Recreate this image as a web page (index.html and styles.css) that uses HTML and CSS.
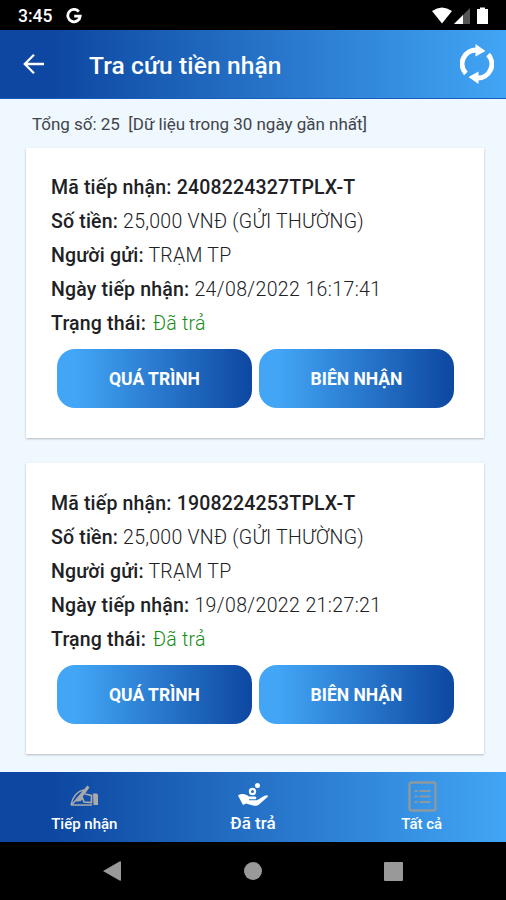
FILE: index.html
```html
<!DOCTYPE html>
<html lang="vi">
<head>
<meta charset="utf-8">
<title>Tra cứu tiền nhận</title>
<link rel="stylesheet" href="styles.css">
</head>
<body>
<div class="status">
  <span class="clock">3:45</span>
  <svg class="google" width="16" height="16" viewBox="0 0 16 16"><path d="M12.8 3.6A6.2 6.2 0 1 0 14.2 8.1H8.2" fill="none" stroke="#fff" stroke-width="2.8"/></svg>
  <svg class="signals" width="58" height="18" viewBox="0 0 58 18"><path d="M0 4Q10-3 20 4L10 16.500Z" fill="#fff"/><path d="M38 1V17H22Z" fill="#555"/><path d="M31 8V17H22Z" fill="#fff"/><path d="M48 2V.5h5V2h3v15H45V2Z" fill="#fff"/></svg>
</div>
<header class="bar">
  <svg class="back" width="22" height="22" viewBox="0 0 22 22" fill="none" stroke="#fff" stroke-width="2.300"><path d="M21 11H2M11 1.800 1.800 11 11 20.200"/></svg>
  <h1>Tra cứu tiền nhận</h1>
  <svg class="refresh" width="34" height="40" viewBox="0 0 34 40"><g fill="none" stroke="#fff" stroke-width="5"><path d="M5.900 29.500A14 14 0 0 1 17 6"/><path d="M28.100 10.500A14 14 0 0 1 17 34"/></g><path d="M15.500 0 25.500 7 15.500 12.500ZM18.500 27.500V40L8.500 33Z" fill="#fff"/></svg>
</header>
<main>
  <p class="summary">Tổng số: 25&nbsp; [Dữ liệu trong 30 ngày gần nhất]</p>
  <section class="card">
    <p class="code"><b>Mã tiếp nhận: 2408224327TPLX-T</b></p>
    <p class="amount"><b>Số tiền:</b> 25,000 VNĐ (GỬI THƯỜNG)</p>
    <p class="sender"><b>Người gửi:</b> TRẠM TP</p>
    <p class="date"><b>Ngày tiếp nhận:</b> 24/08/2022 16:17:41</p>
    <p class="state"><b>Trạng thái:</b> <span>Đã trả</span></p>
    <div class="actions"><button>QUÁ TRÌNH</button><button>BIÊN NHẬN</button></div>
  </section>
  <section class="card">
    <p class="code"><b>Mã tiếp nhận: 1908224253TPLX-T</b></p>
    <p class="amount"><b>Số tiền:</b> 25,000 VNĐ (GỬI THƯỜNG)</p>
    <p class="sender"><b>Người gửi:</b> TRẠM TP</p>
    <p class="date"><b>Ngày tiếp nhận:</b> 19/08/2022 21:27:21</p>
    <p class="state"><b>Trạng thái:</b> <span>Đã trả</span></p>
    <div class="actions"><button>QUÁ TRÌNH</button><button>BIÊN NHẬN</button></div>
  </section>
</main>
<nav class="tabs">
  <div class="tab">
    <svg width="32" height="32" viewBox="0 0 32 32"><path d="M3 25H24M3 25C4 18 9 11 16 10M4.500 24 20 6" fill="none" stroke="#a9aaab" stroke-width="1.500"/><path d="M8 21 19 6.500 21 7.500 11 21Z" fill="#a9aaab" stroke="#a9aaab"/><path d="M17 14 23.500 15.500V22.500L16 22 14.500 18 11.500 21" fill="none" stroke="#a9aaab" stroke-width="1.700"/><path d="M25 13.500H29L30 15V25H25.500Z" fill="#a9aaab"/></svg>
    <span>Tiếp nhận</span>
  </div>
  <div class="tab active">
    <svg width="32" height="32" viewBox="0 0 32 32"><path d="M1 15.500C5 13 9 14 12 16.500H18Q20.500 17.500 18.500 19.200H12V20.200H20L27 16Q32 14 30.500 17L22 24.500Q20 26.500 16 25.500L9 23.500 6 25Z" fill="#fff"/><circle cx="15.500" cy="11.500" r="2.600" fill="none" stroke="#fff" stroke-width="2.200"/><circle cx="20.500" cy="5.500" r="2.500" fill="#fff"/></svg>
    <span>Đã trả</span>
  </div>
  <div class="tab">
    <svg width="32" height="32" viewBox="0 0 32 32" fill="none" stroke="#8d999f" stroke-width="2.400"><rect x="3.500" y="2.500" width="26" height="28" rx="2"/><path d="M8.500 11H11.500M13.500 11H24.500M8.500 16.500H11.500M13.500 16.500H24.500M8.500 22H11.500M13.500 22H24.500" stroke-width="2"/></svg>
    <span>Tất cả</span>
  </div>
</nav>
<footer class="system">
  <svg width="20" height="22" viewBox="0 0 20 22"><path d="M1 11 18 1.200Q19 1 19 2V20Q19 21 18 20.800Z" fill="#999"/></svg>
  <i class="home"></i>
  <i class="recent"></i>
</footer>
</body>
</html>
```
FILE: styles.css
```css
* { box-sizing: border-box; }
body { margin: 0; width: 506px; height: 900px; display: flex; flex-direction: column; background: #000; font-family: Roboto, "Noto Sans", sans-serif; color: #202124; overflow: hidden; }
p, h1 { margin: 0; white-space: nowrap; }
.status { height: 30px; display: flex; align-items: center; padding: 2px 16px 0 18px; color: #fff; }
.clock { width: 48px; font-size: 17.500px; font-weight: 500; }
.signals { margin-left: auto; }
.bar { height: 69px; display: flex; align-items: center; padding: 0 12px 0 23px; background: linear-gradient(90deg, #0d47a1 10%, #42a5f5); border-bottom: 1px solid #175cc0; color: #fff; }
.bar h1 { margin: 3px 0 0 44px; font-size: 24.500px; line-height: 30px; font-weight: 500; letter-spacing: .12px; }
.refresh { margin-left: auto; }
main { height: 673px; background: #eff7ff; }
.summary { height: 49px; padding: 0 0 0 32px; font-size: 17px; line-height: 50px; letter-spacing: -.02px; color: #414549; }
.card { width: 458px; height: 290px; margin: 0 0 25px 26px; padding: 23px 25px 0; background: #fff; box-shadow: 0 1px 2px rgba(0,0,0,.25); font-size: 19.500px; }
.card + .card { height: 291px; padding-top: 24px; }
.card p { height: 34px; line-height: 34px; font-weight: 300; letter-spacing: .27px; }
.card .date { letter-spacing: .38px; }
.card b { font-weight: 500; letter-spacing: .18px; }
.state span { color: #168b16; margin-left: 2px; }
.actions { display: flex; gap: 7px; padding: 8px 0 0 6px; }
button { width: 195px; height: 59px; padding: 1px 0 0; border: 0; border-radius: 18px; background: linear-gradient(90deg, #42a5f5 10%, #0d47a1); color: #fff; font: 700 17.500px Roboto, sans-serif; }
.tabs { height: 70px; display: grid; grid-template-columns: repeat(3, 1fr); background: linear-gradient(90deg, #0d47a1 10%, #42a5f5); color: #fff; }
.tab { display: flex; flex-direction: column; align-items: center; padding-top: 8px; font-size: 15px; line-height: 24px; font-weight: 500; }
.active { font-size: 17px; line-height: 22px; }
.system { height: 58px; display: flex; align-items: center; padding-left: 102px; }
.home { width: 18px; height: 18px; border-radius: 50%; background: #999; margin-left: 122px; }
.recent { width: 19px; height: 19px; border-radius: 1px; background: #999; margin-left: 122px; }
```
